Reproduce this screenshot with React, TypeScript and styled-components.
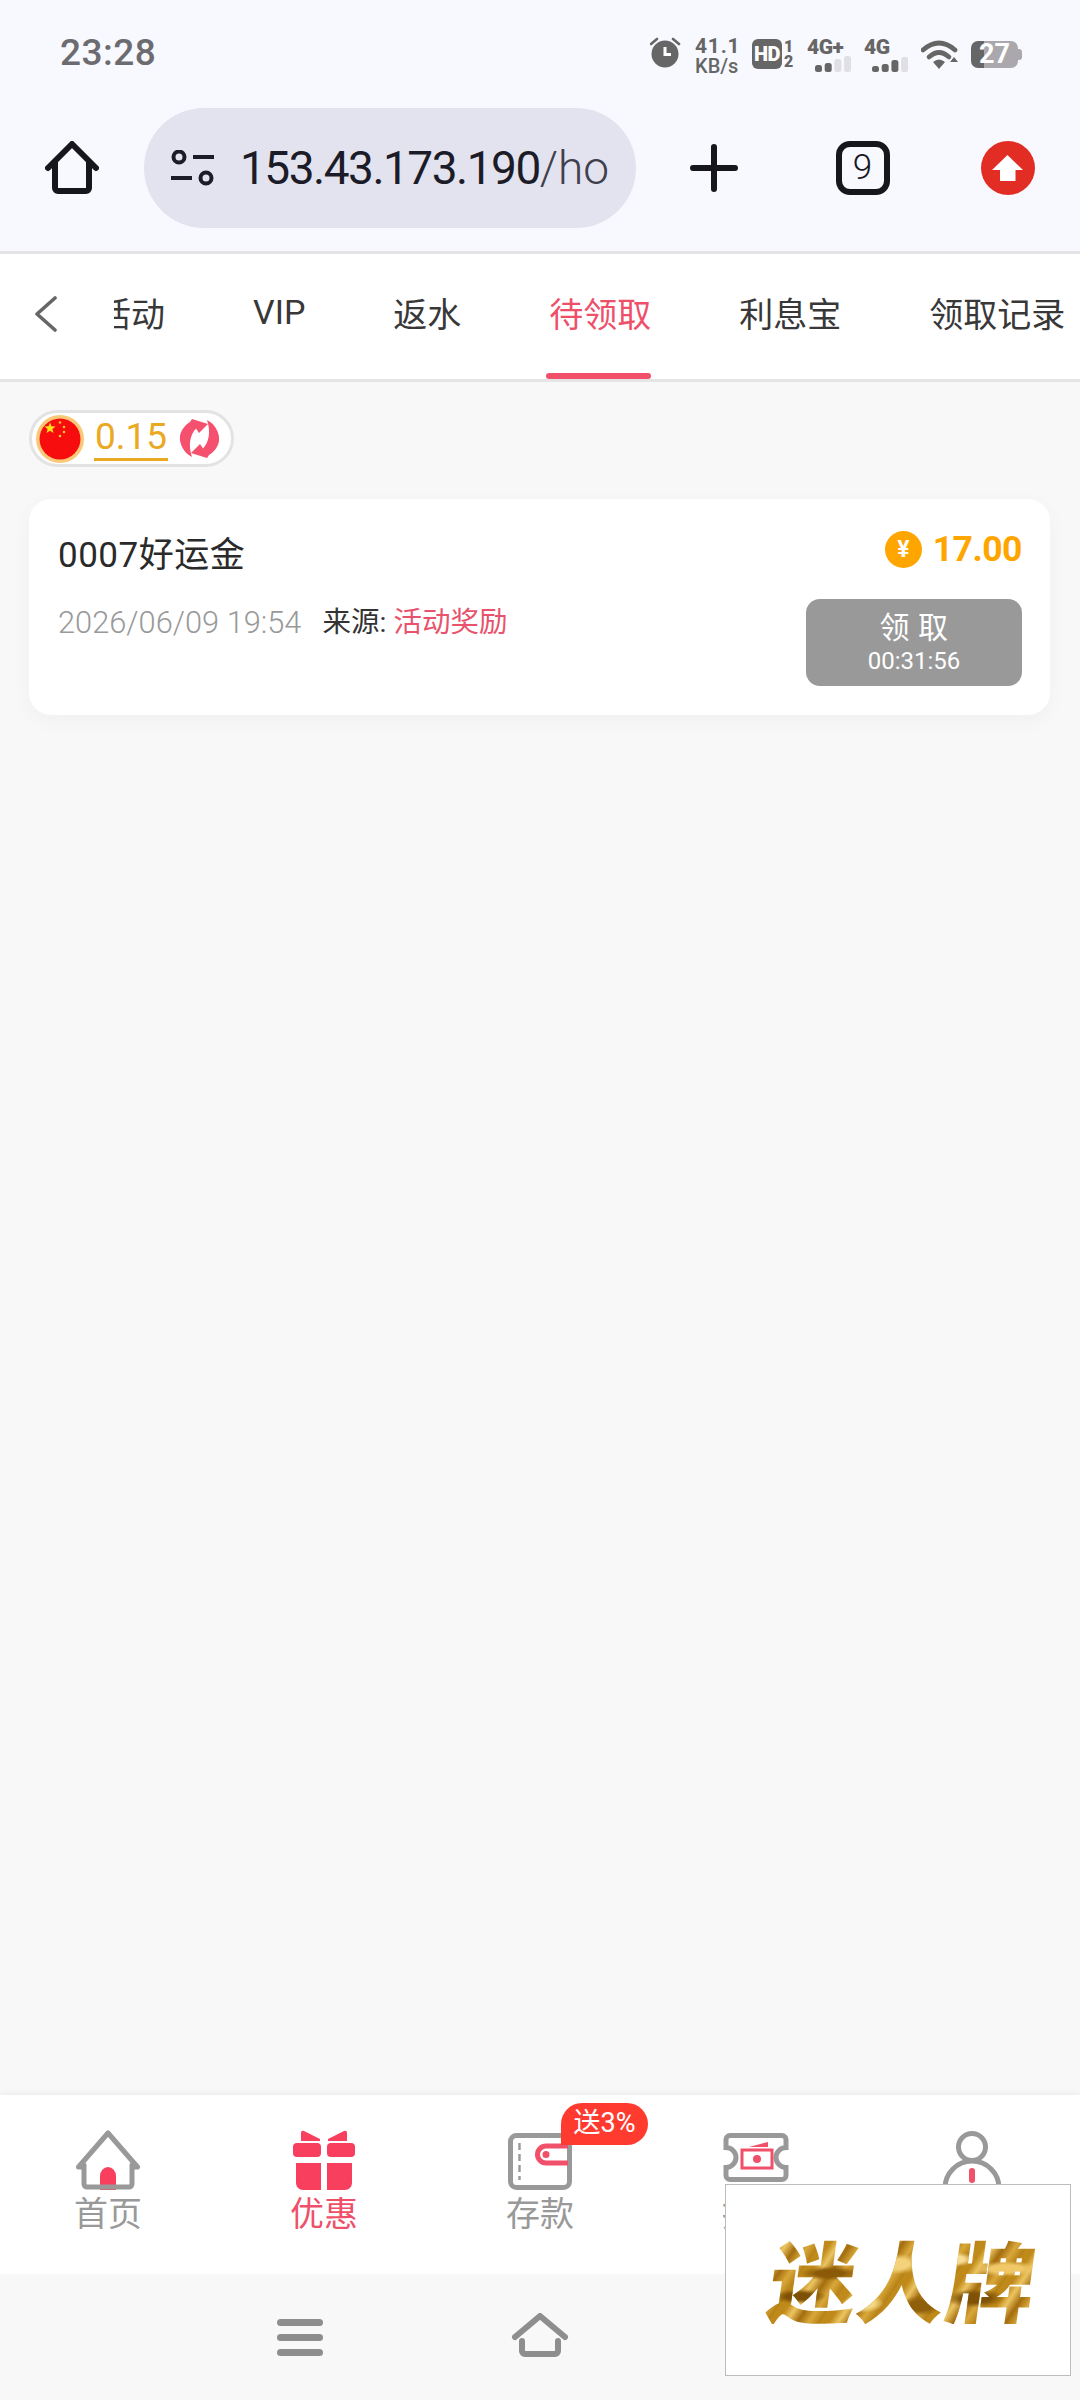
import React from "react";
import styled, { createGlobalStyle } from "styled-components";

const FONT = `Roboto, "Noto Sans CJK SC", sans-serif`;

const Global = createGlobalStyle`
  html, body { margin: 0; padding: 0; width: 1080px; height: 2400px; overflow: hidden; }
  body { font-family: ${FONT}; background: #f8f8f8; }
  * { box-sizing: border-box; }
`;

const Page = styled.div`
  position: relative;
  width: 1080px;
  height: 2400px;
  display: flex;
  flex-direction: column;
  overflow: hidden;
  background: #f8f8f8;
`;

/* ---------- status bar ---------- */
const StatusBar = styled.div`
  height: 108px;
  flex: none;
  display: flex;
  justify-content: space-between;
  align-items: flex-start;
  padding: 34px 58px 0 60px;
  background: #f8f8ff;
  color: #666;
`;
const Clock = styled.div`
  font-size: 37px;
  line-height: 38px;
  font-weight: 500;
  letter-spacing: 0.5px;
  color: #6c6c70;
`;
const StatusIcons = styled.div`
  display: flex;
  align-items: flex-start;
  gap: 13px;
  margin-top: 2px;
`;
const Speed = styled.div`
  width: 44px;
  display: flex;
  flex-direction: column;
  color: #666;
`;
const SpeedValue = styled.span`
  font-size: 21px;
  line-height: 20px;
  font-weight: 700;
  letter-spacing: 0.8px;
`;
const SpeedUnit = styled.span`
  font-size: 20px;
  line-height: 20px;
  font-weight: 500;
`;
const HdGroup = styled.div`
  width: 42px;
  display: flex;
  align-items: flex-end;
  gap: 2px;
  margin-top: 3px;
`;
const HdBox = styled.div`
  width: 30px;
  height: 30px;
  border-radius: 6px;
  background: #666;
  color: #fff;
  font-size: 20px;
  line-height: 30px;
  font-weight: 900;
  letter-spacing: -0.5px;
  text-align: center;
`;
const SimStack = styled.div`
  display: flex;
  flex-direction: column;
  font-size: 16px;
  line-height: 15px;
  font-weight: 900;
  color: #666;
`;
const NetGroup = styled.div`
  width: 44px;
  height: 34px;
  display: flex;
  flex-direction: column;
  margin-top: 3px;
`;
const NetLabel = styled.span`
  font-size: 21px;
  line-height: 17px;
  font-weight: 900;
  letter-spacing: -0.5px;
  color: #666;
`;
const NetBars = styled.svg`
  align-self: flex-end;
  margin-top: -1px;
`;
const Battery = styled.div`
  position: relative;
  width: 47px;
  height: 27px;
  margin: 5px 4px 0 -1px;
  border-radius: 7px;
  background: linear-gradient(90deg, #666 0 13px, #aaa8ac 13px);
  color: #fff;
  font-size: 27px;
  line-height: 27px;
  font-weight: 700;
  text-align: right;
  padding-right: 8px;
  &::after {
    content: "";
    position: absolute;
    right: -4px;
    top: 8px;
    width: 4px;
    height: 11px;
    border-radius: 0 3px 3px 0;
    background: #aaa8ac;
  }
`;

/* ---------- browser bar ---------- */
const BrowserBar = styled.div`
  height: 146px;
  flex: none;
  display: flex;
  align-items: flex-start;
  padding: 0 45px 0 45px;
  background: #f8f8ff;
  border-bottom: 3px solid #e3e3e8;
`;
const BrowserIcon = styled.div`
  width: 54px;
  height: 54px;
  margin-top: 33px;
  flex: none;
  display: flex;
  align-items: center;
  justify-content: center;
`;
const UrlPill = styled.div`
  width: 492px;
  height: 120px;
  margin-left: 45px;
  flex: none;
  display: flex;
  align-items: center;
  gap: 26px;
  padding-left: 27px;
  border-radius: 60px;
  background: #e3e3ef;
  overflow: hidden;
`;
const UrlText = styled.div`
  font-size: 46px;
  line-height: 60px;
  letter-spacing: -1.5px;
  color: #1c1c28;
  white-space: nowrap;
`;
const UrlPath = styled.span`
  font-weight: 300;
  letter-spacing: 0;
  color: #3f3f4e;
`;
const ActionRow = styled.div`
  flex: 1;
  display: flex;
  justify-content: space-between;
  align-items: flex-start;
  padding-left: 51px;
`;
const TabCount = styled.div`
  width: 54px;
  height: 54px;
  margin: 33px 0 0 3px;
  border: 6px solid #16161c;
  border-radius: 14px;
  font-size: 35px;
  line-height: 41px;
  font-weight: 300;
  text-align: center;
  color: #16161c;
`;

/* ---------- tab bar ---------- */
const TabBar = styled.div`
  height: 128px;
  flex: none;
  display: flex;
  background: #fff;
  border-bottom: 3px solid #e5e5e5;
`;
const BackSlot = styled.div`
  width: 114px;
  flex: none;
  display: flex;
  align-items: center;
  padding-left: 34px;
  padding-bottom: 6px;
`;
const TabScroller = styled.div`
  flex: 1;
  overflow: hidden;
`;
const TabTrack = styled.div`
  display: flex;
  gap: 88px;
  height: 100%;
  margin-left: -17px;
  width: max-content;
`;
const TabItem = styled.div<{ $active?: boolean }>`
  position: relative;
  height: 100%;
  display: flex;
  align-items: center;
  padding-bottom: 9px;
  font-size: 34px;
  color: ${(p) => (p.$active ? "#ee506a" : "#383838")};
  white-space: nowrap;
`;
const TabLine = styled.i`
  position: absolute;
  left: -3px;
  right: 0;
  bottom: 0;
  height: 6px;
  border-radius: 3px;
  background: #f2506a;
`;

/* ---------- content ---------- */
const Content = styled.div`
  flex: 1;
  padding: 28px 30px 0 29px;
  display: flex;
  flex-direction: column;
  align-items: flex-start;
  gap: 32px;
`;
const BalancePill = styled.div`
  width: 205px;
  height: 57px;
  display: flex;
  align-items: center;
  padding-left: 4px;
  border: 3px solid #e3e3e3;
  border-radius: 29px;
  background: #fff;
`;
const BalanceValue = styled.div`
  margin-left: 10px;
  padding: 0 1px 1px;
  border-bottom: 3px solid #eaa923;
  font-size: 37px;
  line-height: 40px;
  color: #eaa923;
`;
const RefreshIcon = styled.svg`
  margin-left: 11px;
  flex: none;
`;
const Card = styled.div`
  width: 100%;
  height: 216px;
  display: flex;
  justify-content: space-between;
  padding: 29px 28px 29px 29px;
  border-radius: 22px;
  background: #fff;
  box-shadow: 0 6px 18px rgba(120, 90, 90, 0.05);
`;
const CardLeft = styled.div`
  display: flex;
  flex-direction: column;
  gap: 20px;
`;
const CardTitle = styled.div`
  font-size: 35px;
  line-height: 56px;
  color: #2a2a2a;
  letter-spacing: 0.5px;
`;
const CardMeta = styled.div`
  display: flex;
  align-items: center;
  gap: 21px;
  font-size: 28.500px;
  line-height: 38px;
`;
const MetaDate = styled.span`
  font-size: 30.800px;
  font-weight: 300;
  color: #999;
`;
const MetaSource = styled.span`
  color: #333;
`;
const MetaLink = styled.span`
  color: #e8526c;
`;
const CardRight = styled.div`
  display: flex;
  flex-direction: column;
  justify-content: space-between;
  align-items: flex-end;
  margin-top: -3px;
`;
const Amount = styled.div`
  display: flex;
  align-items: center;
  gap: 11px;
  margin-top: 4px;
  font-size: 35.500px;
  line-height: 40px;
  font-weight: 700;
  letter-spacing: -0.5px;
  color: #ffa500;
`;
const Coin = styled.div`
  width: 37px;
  height: 37px;
  border-radius: 50%;
  background: #ffa500;
  color: #fff;
  font-size: 23px;
  line-height: 37px;
  font-weight: 700;
  text-align: center;
`;
const ClaimButton = styled.div`
  width: 216px;
  height: 87px;
  display: flex;
  flex-direction: column;
  align-items: center;
  padding-top: 10px;
  border-radius: 14px;
  background: #999;
  color: #fff;
`;
const ClaimLabel = styled.span`
  font-size: 30px;
  line-height: 38px;
  letter-spacing: 0.6px;
`;
const ClaimTime = styled.span`
  font-size: 24px;
  line-height: 29px;
`;

/* ---------- bottom nav ---------- */
const BottomNav = styled.div`
  height: 179px;
  flex: none;
  display: grid;
  grid-template-columns: repeat(5, 216px);
  background: #fff;
  box-shadow: 0 -2px 6px rgba(0, 0, 0, 0.05);
`;
const NavItem = styled.div<{ $active?: boolean }>`
  position: relative;
  display: flex;
  flex-direction: column;
  align-items: center;
  padding-top: 35px;
  font-size: 34px;
  line-height: 48px;
  color: ${(p) => (p.$active ? "#ee506a" : "#999")};
`;
const NavIcon = styled.svg`
  display: block;
  height: 60px;
  flex: none;
`;
const NavBadge = styled.span`
  position: absolute;
  left: 129px;
  top: 8px;
  width: 87px;
  height: 42px;
  border-radius: 21px 21px 21px 0;
  background: #ff3b30;
  color: #fff;
  font-size: 27px;
  line-height: 41px;
  text-align: center;
`;
const GestureBar = styled.div`
  height: 126px;
  flex: none;
  display: grid;
  grid-template-columns: 240px 240px 240px;
  justify-content: center;
  justify-items: center;
  align-items: center;
  padding-bottom: 2px;
  background: #f8f8f8;
`;
const MenuGlyph = styled.svg`
  margin-top: 6px;
`;
const Overlay = styled.div`
  position: absolute;
  left: 725px;
  top: 2184px;
  width: 346px;
  height: 192px;
  display: flex;
  align-items: center;
  justify-content: center;
  padding: 0 0 4px 11px;
  border: 1.500px solid #bdbdbd;
  background: #fff;
`;
const GoldText = styled.div`
  font-family: "Noto Sans CJK SC", sans-serif;
  font-size: 88px;
  line-height: 92px;
  font-weight: 900;
  letter-spacing: 1px;
  white-space: nowrap;
  transform: skewX(-8deg);
  color: transparent;
  background:
    radial-gradient(ellipse at 12% 70%, #7d5006 0 4%, transparent 8%),
    radial-gradient(ellipse at 22% 45%, #8a5a08 0 5%, transparent 10%),
    radial-gradient(ellipse at 36% 78%, #f3d784 0 5%, transparent 9%),
    radial-gradient(ellipse at 47% 35%, #f4d27a 0 6%, transparent 12%),
    radial-gradient(ellipse at 58% 80%, #8f5f0b 0 5%, transparent 10%),
    radial-gradient(ellipse at 68% 30%, #f7dd95 0 4%, transparent 8%),
    radial-gradient(ellipse at 78% 72%, #7f5207 0 5%, transparent 10%),
    radial-gradient(ellipse at 88% 40%, #f0c868 0 5%, transparent 10%),
    repeating-linear-gradient(118deg, #c08a1a 0 8px, #ecc562 16px, #a36c0e 26px, #d9a83a 36px, #b47f14 46px);
  -webkit-background-clip: text;
  background-clip: text;
`;

/* ---------- icons ---------- */
const Signal = ({ level, heights }: { level: number; heights: number[] }) => (
  <NetBars width="36" height="17" viewBox="0 0 36 17">
    {heights.map((h, i) => (
      <rect key={i} x={i * 9.7} y={17 - h} width="7" height={h} rx="2.500" fill={i < level ? "#666" : "#dfdfe4"} />
    ))}
  </NetBars>
);

const DARK = "#16161c";
const REFRESH_HALF = "M13 1L29 6 20 15l-3-4.500C11 17 9 27 13 39 5 35 0 26 1 18 2 12 6 7 11 4z";

export default function App() {
  return (
    <Page>
      <Global />
      <StatusBar>
        <Clock>23:28</Clock>
        <StatusIcons>
          <svg width="32" height="32" viewBox="0 0 32 32">
            <circle cx="15" cy="18" r="13.500" fill="#666" />
            <path d="M15 11v7.500h6" fill="none" stroke="#fff" strokeWidth="3" />
            <path d="M1 8l6-5M29 8l-6-5" stroke="#666" strokeWidth="2.600" strokeLinecap="round" />
          </svg>
          <Speed>
            <SpeedValue>41.1</SpeedValue>
            <SpeedUnit>KB/s</SpeedUnit>
          </Speed>
          <HdGroup>
            <HdBox>HD</HdBox>
            <SimStack>
              <span>1</span>
              <span>2</span>
            </SimStack>
          </HdGroup>
          <NetGroup>
            <NetLabel>4G+</NetLabel>
            <Signal level={2} heights={[7, 9, 13, 16]} />
          </NetGroup>
          <NetGroup>
            <NetLabel>4G</NetLabel>
            <Signal level={3} heights={[6, 8, 12, 15]} />
          </NetGroup>
          <svg width="38" height="32" viewBox="0 0 38 32" style={{ marginTop: 3 }}>
            <path d="M2 11Q18-3 34 11" fill="none" stroke="#666" strokeWidth="4.800" strokeLinecap="round" />
            <path d="M8 18Q18 9 28 18" fill="none" stroke="#666" strokeWidth="4.600" strokeLinecap="round" />
            <path d="M12 23Q18 18 24 23L18 30z" fill="#666" />
            <path d="M33 18l4 5h-8z" fill="#666" />
          </svg>
          <Battery>27</Battery>
        </StatusIcons>
      </StatusBar>

      <BrowserBar>
        <BrowserIcon>
          <svg width="54" height="54" viewBox="0 0 54 54" fill="none" stroke={DARK} strokeWidth="6" strokeLinecap="round" strokeLinejoin="round">
            <path d="M3 27L27 3l24 24" />
            <path d="M10 22v25a3 3 0 0 0 3 3h28a3 3 0 0 0 3-3V22" />
          </svg>
        </BrowserIcon>
        <UrlPill>
          <svg width="43" height="36" viewBox="0 0 43 36" fill="none" stroke="#1c1c28" strokeWidth="4" style={{ flex: "none" }}>
            <circle cx="8" cy="7" r="5.500" />
            <path d="M22 7h21" />
            <path d="M0 28h21" />
            <circle cx="35" cy="28" r="5.500" />
          </svg>
          <UrlText>
            153.43.173.190<UrlPath>/ho</UrlPath>
          </UrlText>
        </UrlPill>
        <ActionRow>
          <BrowserIcon>
            <svg width="48" height="48" viewBox="0 0 48 48" stroke={DARK} strokeWidth="6" strokeLinecap="round">
              <path d="M3 24h42M24 3v42" />
            </svg>
          </BrowserIcon>
          <TabCount>9</TabCount>
          <BrowserIcon>
            <svg width="54" height="54" viewBox="0 0 54 54">
              <circle cx="27" cy="27" r="27" fill="#e22d25" />
              <path d="M26.500 14L42 29H34.500V40H19V29H11z" fill="#fff" />
            </svg>
          </BrowserIcon>
        </ActionRow>
      </BrowserBar>

      <TabBar>
        <BackSlot>
          <svg width="24" height="36" viewBox="0 0 24 36" fill="none" stroke="#666" strokeWidth="3.600" strokeLinecap="round" strokeLinejoin="round">
            <path d="M21 2L3 18l18 16" />
          </svg>
        </BackSlot>
        <TabScroller>
          <TabTrack>
            <TabItem>活动</TabItem>
            <TabItem>VIP</TabItem>
            <TabItem>返水</TabItem>
            <TabItem $active>
              待领取
              <TabLine />
            </TabItem>
            <TabItem>利息宝</TabItem>
            <TabItem>领取记录</TabItem>
          </TabTrack>
        </TabScroller>
      </TabBar>

      <Content>
        <BalancePill>
          <svg width="48" height="48" viewBox="0 0 48 48" style={{ flex: "none" }}>
            <circle cx="24" cy="24" r="24" fill="#f9c878" />
            <circle cx="24" cy="24" r="20.500" fill="#f70d0d" />
            <path d="M14 7.500l1.500 3.800 4.100.2-3.200 2.600 1.100 4-3.500-2.300-3.500 2.300 1.100-4-3.200-2.600 4.100-.2z" fill="#ffe119" />
            <circle cx="24" cy="7.500" r="1.300" fill="#f9c030" />
            <circle cx="28" cy="12" r="1.300" fill="#f9c030" />
            <circle cx="28" cy="17" r="1.300" fill="#f9c030" />
            <circle cx="24" cy="21" r="1.300" fill="#f9c030" />
          </svg>
          <BalanceValue>0.15</BalanceValue>
          <RefreshIcon width="42" height="42" viewBox="0 0 42 42" fill="#f5506e">
            <path d={REFRESH_HALF} />
            <path d={REFRESH_HALF} transform="rotate(180 20.500 20.500)" />
          </RefreshIcon>
        </BalancePill>
        <Card>
          <CardLeft>
            <CardTitle>0007好运金</CardTitle>
            <CardMeta>
              <MetaDate>2026/06/09 19:54</MetaDate>
              <MetaSource>
                来源: <MetaLink>活动奖励</MetaLink>
              </MetaSource>
            </CardMeta>
          </CardLeft>
          <CardRight>
            <Amount>
              <Coin>¥</Coin>
              17.00
            </Amount>
            <ClaimButton>
              <ClaimLabel>领 取</ClaimLabel>
              <ClaimTime>00:31:56</ClaimTime>
            </ClaimButton>
          </CardRight>
        </Card>
      </Content>

      <BottomNav>
        <NavItem>
          <NavIcon width="68" viewBox="0 0 68 60" fill="none">
            <path d="M26 60V46a8 9 0 0 1 16 0v14z" fill="#f83f5e" />
            <path d="M10 37H4.500L34 3l29.500 34H58M10 35v19a3 3 0 0 0 3 3h42a3 3 0 0 0 3-3V35" stroke="#999" strokeWidth="5" strokeLinejoin="round" strokeLinecap="round" />
          </NavIcon>
          首页
        </NavItem>
        <NavItem $active>
          <NavIcon width="62" viewBox="0 0 62 60" fill="#f83f5e">
            <path d="M8 3q0-3 3-2l16 8v2H8zM54 3q0-3-3-2L35 9v2h19z" />
            <rect x="0" y="13" width="28" height="14" rx="4" />
            <rect x="34" y="13" width="28" height="14" rx="4" />
            <path d="M3 33h25v27H10a7 7 0 0 1-7-7zM34 33h25v20a7 7 0 0 1-7 7H34z" />
          </NavIcon>
          优惠
        </NavItem>
        <NavItem>
          <NavIcon width="64" viewBox="0 0 64 60">
            <rect x="2.500" y="5.500" width="59" height="52" rx="6" fill="none" stroke="#999" strokeWidth="5" />
            <path d="M11.500 13v37" stroke="#999" strokeWidth="2.400" strokeDasharray="7 4" />
            <path d="M60 16H38a8.500 8.500 0 0 0 0 17h22" fill="none" stroke="#f0506a" strokeWidth="5" />
            <circle cx="38" cy="24.500" r="3.500" fill="#f0506a" />
          </NavIcon>
          存款
          <NavBadge>送3%</NavBadge>
        </NavItem>
        <NavItem>
          <NavIcon width="68" viewBox="0 0 68 60">
            <path d="M8 5.500h52a4 4 0 0 1 4 4v8a10 10 0 0 0 0 20v8a4 4 0 0 1-4 4H8a4 4 0 0 1-4-4v-8a10 10 0 0 0 0-20v-8a4 4 0 0 1 4-4z" fill="none" stroke="#999" strokeWidth="5" />
            <rect x="20" y="20" width="30" height="18" fill="none" stroke="#f0506a" strokeWidth="3" />
            <circle cx="35" cy="29" r="4" fill="#f0506a" />
            <path d="M27 17l19-5v5z" fill="#f0506a" />
          </NavIcon>
          提款
        </NavItem>
        <NavItem>
          <NavIcon width="60" viewBox="0 0 60 60">
            <circle cx="30" cy="17" r="13.500" fill="none" stroke="#999" strokeWidth="5" />
            <path d="M3 58a27 27 0 0 1 54 0" fill="none" stroke="#999" strokeWidth="5" />
            <rect x="27" y="38" width="6" height="15" rx="3" fill="#f0506a" />
          </NavIcon>
          我的
        </NavItem>
      </BottomNav>

      <GestureBar>
        <MenuGlyph width="46" height="40" viewBox="0 0 46 40" fill="#8e8e8e">
          <rect x="0" y="0" width="46" height="7" rx="3.500" />
          <rect x="0" y="15" width="46" height="7" rx="3.500" />
          <rect x="0" y="30" width="46" height="7" rx="3.500" />
        </MenuGlyph>
        <svg width="58" height="46" viewBox="0 0 58 46" fill="none" stroke="#8e8e8e" strokeWidth="6" strokeLinecap="round" strokeLinejoin="round">
          <path d="M4 24L29 3l25 21" />
          <path d="M11 28v10a3 3 0 0 0 3 3h30a3 3 0 0 0 3-3V28" />
        </svg>
        <svg width="40" height="40" viewBox="0 0 40 40" fill="none" stroke="#8e8e8e" strokeWidth="6" strokeLinecap="round">
          <path d="M28 4L10 20l18 16" />
        </svg>
      </GestureBar>

      <Overlay>
        <GoldText>迷人牌</GoldText>
      </Overlay>
    </Page>
  );
}
